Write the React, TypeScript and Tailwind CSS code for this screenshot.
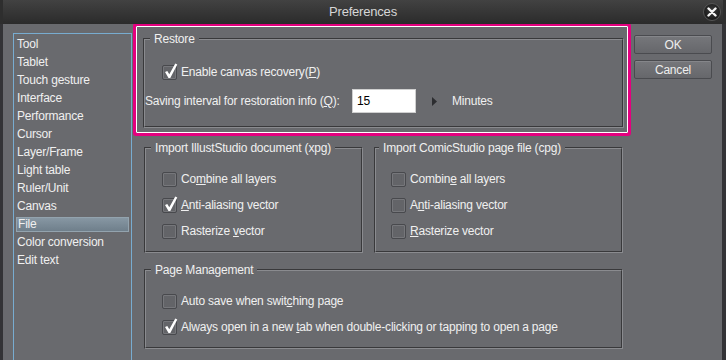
import React from 'react';

const items = [
    'Tool', 'Tablet', 'Touch gesture', 'Interface', 'Performance', 'Cursor', 'Layer/Frame',
    'Light table', 'Ruler/Unit', 'Canvas', 'File', 'Color conversion', 'Edit text',
];

function Check({ checked }: { checked?: boolean }) {
    return (
        <span className="relative w-[15px] h-[15px] shrink-0 rounded-[2px] border border-[#48494d] bg-[#636468] shadow-[inset_0_0_0_1px_#76777b]">
            {checked && (
                <svg className="absolute -top-[3px] left-[0px]" width="15" height="16" viewBox="0 0 15 16">
                    <path d="M2 9 L4.3 8 L6.3 11.2 L12.3 0.5 L14.3 1.6 L7.3 15 L5.5 15 Z" fill="#ffffff" />
                </svg>
            )}
        </span>
    );
}

function Row({ checked, children }: { checked?: boolean; children: React.ReactNode }) {
    return (
        <div className="flex items-center h-[16px] gap-[4px]">
            <Check checked={checked} />
            <span className="whitespace-nowrap">{children}</span>
        </div>
    );
}

const groupCls = 'border-2 [border-style:groove] border-[#8a8b8f] rounded-[1px]';
const legendCls = 'ml-[5px] px-[4px] leading-[16px] whitespace-nowrap';

export default function App() {
    return (
        <div className="w-[726px] h-[360px] overflow-hidden bg-[#696a6e] text-[#f0f0f0] text-[12px] tracking-[-0.2px] font-['Liberation_Sans',Arial,sans-serif]">
            {/* title bar */}
            <div className="relative h-[24px] flex items-center justify-center bg-gradient-to-b from-[#424242] to-[#2b2b2b] border-x-[3px] border-[#2e2e2e]">
                <span className="text-[13px] text-[#d6d6d6]">Preferences</span>
                <div className="absolute right-[2px] top-[3px] w-[18px] h-[18px] rounded-full bg-[radial-gradient(circle_at_50%_40%,#3a3a3a,#0e0e0e)] border border-[#555] flex items-center justify-center">
                    <svg width="10" height="10" viewBox="0 0 10 10">
                        <path d="M1.5 1.5 L8.5 8.5 M8.5 1.5 L1.5 8.5" stroke="#f4f4f4" strokeWidth="2.4" strokeLinecap="round" />
                    </svg>
                </div>
            </div>

            <div className="flex h-[336px] border-l-[3px] border-r-[4px] border-[#333336]">
                {/* sidebar */}
                <div className="ml-[10px] mt-[9px] w-[119px] h-[340px] shrink-0 border border-[#78acd0] pt-[1px]">
                    {items.map((it) => (
                        <div key={it} className="h-[18px] flex items-center px-[2px]">
                            <div
                                className={
                                    'w-full h-[15px] flex items-center px-[1px] ' +
                                    (it === 'File' ? 'bg-gradient-to-b from-[#8797a3] to-[#6f7f8b] border border-[#93a3ae]' : '')
                                }
                            >
                                {it}
                            </div>
                        </div>
                    ))}
                </div>

                {/* main */}
                <div className="ml-[1px] w-[498px] flex flex-col -mt-[1px]">
                    <div className="h-[113px] rounded-[3px] border-[3px] border-[#e4007f]">
                        <div className="h-full border border-white rounded-[1px] pl-[6px] pr-[3px] pt-[4px]">
                            <fieldset className={groupCls + ' h-[97px]'}>
                                <legend className={legendCls}>Restore</legend>
                                <div className="pl-[17px] mt-[17px]">
                                    <Row checked>
                                        Enable canvas recovery(<u>P</u>)
                                    </Row>
                                </div>
                                <div className="flex items-center h-[24px] mt-[9px]">
                                    <span className="w-[207px] whitespace-nowrap">
                                        Saving interval for restoration info (<u>Q</u>):
                                    </span>
                                    <div className="w-[64px] h-[24px] bg-white text-black flex items-center pl-[4px] border border-[#d0d0d0]">15</div>
                                    <svg className="ml-[16px]" width="5" height="9" viewBox="0 0 5 9">
                                        <path d="M0 0 L5 4.5 L0 9 Z" fill="#2c2d30" />
                                    </svg>
                                    <span className="ml-[15px]">Minutes</span>
                                </div>
                            </fieldset>
                        </div>
                    </div>

                    <div className="flex mt-[4px] pl-[11px]">
                        <fieldset className={groupCls + ' w-[219px] h-[113px]'}>
                            <legend className={legendCls}>Import IllustStudio document (xpg)</legend>
                            <div className="pl-[16px] mt-[15px] flex flex-col gap-[10px]">
                                <Row>Co<u>m</u>bine all layers</Row>
                                <Row checked><u>A</u>nti-aliasing vector</Row>
                                <Row>Rasterize <u>v</u>ector</Row>
                            </div>
                        </fieldset>
                        <fieldset className={groupCls + ' ml-[11px] w-[249px] h-[113px]'}>
                            <legend className={legendCls.replace('ml-[5px]', 'ml-[3px]')}>Import ComicStudio page file (cpg)</legend>
                            <div className="pl-[15px] mt-[15px] flex flex-col gap-[10px]">
                                <Row>Combin<u>e</u> all layers</Row>
                                <Row>A<u>n</u>ti-aliasing vector</Row>
                                <Row><u>R</u>asterize vector</Row>
                            </div>
                        </fieldset>
                    </div>

                    <div className="mt-[9px] pl-[11px]">
                        <fieldset className={groupCls + ' w-[479px] h-[87px]'}>
                            <legend className={legendCls}>Page Management</legend>
                            <div className="pl-[16px] mt-[15px] flex flex-col gap-[10px]">
                                <Row>Auto save when swit<u>c</u>hing page</Row>
                                <Row checked>Always open in a new <u>t</u>ab when double-clicking or tapping to open a page</Row>
                            </div>
                        </fieldset>
                    </div>
                </div>

                {/* buttons */}
                <div className="ml-[3px] mt-[11px] flex flex-col gap-[6px]">
                    <button className="w-[78px] h-[19px] rounded-[2px] border border-[#4a4b4f] bg-gradient-to-b from-[#76777b] to-[#66676b] shadow-[inset_0_1px_0_#85868a] text-[#eeeeee] text-[12px] leading-none">
                        OK
                    </button>
                    <button className="w-[78px] h-[19px] rounded-[2px] border border-[#4a4b4f] bg-gradient-to-b from-[#76777b] to-[#66676b] shadow-[inset_0_1px_0_#85868a] text-[#eeeeee] text-[12px] leading-none">
                        Cancel
                    </button>
                </div>
            </div>
        </div>
    );
}
